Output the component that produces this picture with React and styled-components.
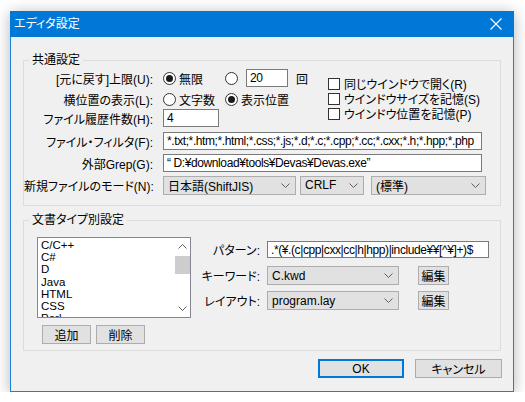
import styled, { createGlobalStyle } from "styled-components";

const GlobalStyle = createGlobalStyle`
    body {
        margin: 0;
        background: #ffffff;
        font-family: "Liberation Sans", "Noto Sans CJK JP", sans-serif;
        font-size: 12px;
        font-feature-settings: "palt";
        color: #000000;
    }
`;

const Window = styled.div`
    box-sizing: border-box;
    width: 504px;
    height: 381px;
    margin: 11px 0 0 10px;
    border: 1px solid #1a7fd6;
    border-top: none;
    background: #f0f0f0;
    box-shadow: 0 2px 14px rgba(0, 0, 0, 0.3);
    display: flex;
    flex-direction: column;
`;

const TitleBar = styled.div`
    height: 26px;
    margin: 0 -1px;
    padding: 0 12px 0 4px;
    background: #0078d7;
    color: #ffffff;
    display: flex;
    align-items: center;
    justify-content: space-between;
    flex: none;
`;

const TitleText = styled.span`
    font-size: 12px;
    line-height: 14px;
`;

const Body = styled.div`
    padding: 0 12px;
    display: flex;
    flex-direction: column;
`;

const Group = styled.fieldset`
    box-sizing: border-box;
    margin: ${(p) => p.$top}px 0 0;
    padding: 0;
    min-width: 0;
    height: ${(p) => p.$height}px;
    border: 1px solid #dcdcdc;
`;

const Legend = styled.legend`
    margin-left: 5px;
    padding: 0 3px;
    font-size: 12px;
    line-height: 14px;
`;

const Top = styled.div`
    display: flex;
`;

const Column = styled.div`
    display: flex;
    flex-direction: column;
    flex: none;
    width: ${(p) => (p.$width ? `${p.$width}px` : "auto")};
    margin-top: ${(p) => p.$top || 0}px;
    margin-left: ${(p) => p.$left || 0}px;
`;

const Row = styled.div`
    display: flex;
    align-items: center;
    height: ${(p) => p.$height || 18}px;
    margin-top: ${(p) => p.$top || 0}px;
    gap: ${(p) => p.$gap ?? 10}px;
`;

const Label = styled.span`
    flex: none;
    width: ${(p) => p.$width || 129}px;
    text-align: right;
    white-space: nowrap;
`;

const Controls = styled.div`
    display: flex;
    align-items: center;
    height: 100%;
`;

const RadioItem = styled.label`
    display: flex;
    align-items: center;
    gap: 3px;
    width: ${(p) => (p.$width ? `${p.$width}px` : "auto")};
    flex: none;
    white-space: nowrap;
`;

const RadioCircle = styled.span`
    box-sizing: border-box;
    width: 13px;
    height: 13px;
    border-radius: 50%;
    border: 1px solid #333333;
    background: #ffffff;
    display: flex;
    align-items: center;
    justify-content: center;

    &::after {
        content: "";
        width: 7px;
        height: 7px;
        border-radius: 50%;
        background: ${(p) => (p.$checked ? "#1a1a1a" : "transparent")};
    }
`;

const TextBox = styled.div`
    box-sizing: border-box;
    width: ${(p) => p.$width}px;
    height: ${(p) => p.$height || 18}px;
    flex: none;
    border: 1px solid #7a7a7a;
    background: #ffffff;
    padding-left: 3px;
    display: flex;
    align-items: center;
    overflow: hidden;
    white-space: nowrap;
    letter-spacing: -0.4px;
`;

const Unit = styled.span`
    margin-left: 8px;
`;

const CheckRow = styled.label`
    display: flex;
    align-items: center;
    gap: 4px;
    height: 15px;
    white-space: nowrap;
`;

const CheckBox = styled.span`
    box-sizing: border-box;
    width: 12px;
    height: 12px;
    border: 1px solid #333333;
    background: #ffffff;
    flex: none;
`;

const SelectBox = styled.div`
    box-sizing: border-box;
    width: ${(p) => p.$width}px;
    height: ${(p) => p.$height || 19}px;
    margin-left: ${(p) => p.$left || 0}px;
    flex: none;
    border: 1px solid #adadad;
    background: #e1e1e1;
    padding: 0 5px 0 4px;
    display: flex;
    align-items: center;
    justify-content: space-between;
    white-space: nowrap;
    overflow: hidden;
`;

const Button = styled.div`
    box-sizing: border-box;
    width: ${(p) => p.$width}px;
    height: 19px;
    margin-left: ${(p) => p.$left || 0}px;
    flex: none;
    border: ${(p) => (p.$default ? "2px solid #0078d7" : "1px solid #adadad")};
    background: #e1e1e1;
    display: flex;
    align-items: center;
    justify-content: center;
`;

const ListBox = styled.div`
    box-sizing: border-box;
    width: 154px;
    height: 81px;
    border: 1px solid #828790;
    background: #ffffff;
    display: flex;
`;

const ListItems = styled.div`
    flex: 1;
    padding: 1px 0 0 3px;
    overflow: hidden;
    font-size: 11.5px;
    line-height: 12.2px;
`;

const ScrollBar = styled.div`
    width: 15px;
    flex: none;
    display: flex;
    flex-direction: column;
    align-items: center;
`;

const ScrollArrow = styled.div`
    height: 17px;
    width: 100%;
    display: flex;
    align-items: center;
    justify-content: center;
`;

const ScrollThumb = styled.div`
    margin-top: 1px;
    width: 15px;
    height: 18px;
    background: #cdcdcd;
`;

const ScrollTrack = styled.div`
    flex: 1;
`;

const ButtonRow = styled.div`
    display: flex;
    margin-top: ${(p) => p.$top || 0}px;
    margin-left: ${(p) => p.$left || 0}px;
`;

const Footer = styled.div`
    display: flex;
    justify-content: flex-end;
    margin: 8px -1px 0 0;
`;

function Chevron({ up }) {
    return (
        <svg width="9" height="5" viewBox="0 0 9 5">
            <path
                d={up ? "M0.5 4.5 L4.5 0.5 L8.5 4.5" : "M0.5 0.5 L4.5 4.5 L8.5 0.5"}
                fill="none"
                stroke="#606060"
                strokeWidth="1"
            />
        </svg>
    );
}

function Radio({ checked, width, children }) {
    return (
        <RadioItem $width={width}>
            <RadioCircle $checked={checked} />
            {children}
        </RadioItem>
    );
}

function Check({ children }) {
    return (
        <CheckRow>
            <CheckBox />
            {children}
        </CheckRow>
    );
}

function Select({ width, left, children }) {
    return (
        <SelectBox $width={width} $left={left}>
            <span>{children}</span>
            <Chevron />
        </SelectBox>
    );
}

const fileTypes = ["C/C++", "C#", "D", "Java", "HTML", "CSS", "Perl"];

export default function App() {
    return (
        <>
            <GlobalStyle />
            <Window>
                <TitleBar>
                    <TitleText>エディタ設定</TitleText>
                    <svg width="12" height="12" viewBox="0 0 12 12">
                        <path d="M0.5 0.5 L11.5 11.5 M11.5 0.5 L0.5 11.5" stroke="#ffffff" strokeWidth="1.1" />
                    </svg>
                </TitleBar>

                <Body>
                    <Group $top={16} $height={153}>
                        <Legend>共通設定</Legend>
                        <Top>
                            <Column $width={304}>
                                <Row $top={2}>
                                    <Label>[元に戻す]上限(U):</Label>
                                    <Controls>
                                        <Radio checked width={62}>無限</Radio>
                                        <Radio width={21} />
                                        <TextBox $width={42}>20</TextBox>
                                        <Unit>回</Unit>
                                    </Controls>
                                </Row>
                                <Row $top={3}>
                                    <Label>横位置の表示(L):</Label>
                                    <Controls>
                                        <Radio width={62}>文字数</Radio>
                                        <Radio checked>表示位置</Radio>
                                    </Controls>
                                </Row>
                                <Row $top={1}>
                                    <Label>ファイル履歴件数(H):</Label>
                                    <TextBox $width={56}>4</TextBox>
                                </Row>
                            </Column>
                            <Column $top={9}>
                                <Check>同じウインドウで開く(R)</Check>
                                <Check>ウインドウサイズを記憶(S)</Check>
                                <Check>ウインドウ位置を記憶(P)</Check>
                            </Column>
                        </Top>
                        <Row $top={5}>
                            <Label>ファイル・フィルタ(F):</Label>
                            <TextBox $width={319}>
                                *.txt;*.htm;*.html;*.css;*.js;*.d;*.c;*.cpp;*.cc;*.cxx;*.h;*.hpp;*.php
                            </TextBox>
                        </Row>
                        <Row $top={4}>
                            <Label>外部Grep(G):</Label>
                            <TextBox $width={319}>“ D:¥download¥tools¥Devas¥Devas.exe”</TextBox>
                        </Row>
                        <Row $top={3} $height={20}>
                            <Label>新規ファイルのモード(N):</Label>
                            <Controls>
                                <Select width={133}>日本語(ShiftJIS)</Select>
                                <Select width={64} left={4}>CRLF</Select>
                                <Select width={115} left={7}>(標準)</Select>
                            </Controls>
                        </Row>
                    </Group>

                    <Group $top={7} $height={138}>
                        <Legend>文書タイプ別設定</Legend>
                        <Top>
                            <Column $left={13} $top={10}>
                                <ListBox>
                                    <ListItems>
                                        {fileTypes.map((t) => (
                                            <div key={t}>{t}</div>
                                        ))}
                                    </ListItems>
                                    <ScrollBar>
                                        <ScrollArrow>
                                            <Chevron up />
                                        </ScrollArrow>
                                        <ScrollThumb />
                                        <ScrollTrack />
                                        <ScrollArrow>
                                            <Chevron />
                                        </ScrollArrow>
                                    </ScrollBar>
                                </ListBox>
                                <ButtonRow $top={7} $left={5}>
                                    <Button $width={49}>追加</Button>
                                    <Button $width={49} $left={5}>削除</Button>
                                </ButtonRow>
                            </Column>
                            <Column $left={9} $top={14}>
                                <Row $height={17} $gap={7}>
                                    <Label $width={60}>パターン:</Label>
                                    <TextBox $width={222} $height={17}>
                                        .*(¥.(c|cpp|cxx|cc|h|hpp)|include¥¥[^¥]+)$
                                    </TextBox>
                                </Row>
                                <Row $height={19} $top={8} $gap={7}>
                                    <Label $width={60}>キーワード:</Label>
                                    <Controls>
                                        <Select width={132}>C.kwd</Select>
                                        <Button $width={31} $left={19}>編集</Button>
                                    </Controls>
                                </Row>
                                <Row $height={19} $top={6} $gap={7}>
                                    <Label $width={60}>レイアウト:</Label>
                                    <Controls>
                                        <Select width={132}>program.lay</Select>
                                        <Button $width={31} $left={19}>編集</Button>
                                    </Controls>
                                </Row>
                            </Column>
                        </Top>
                    </Group>

                    <Footer>
                        <Button $width={86} $default>OK</Button>
                        <Button $width={87} $left={11}>キャンセル</Button>
                    </Footer>
                </Body>
            </Window>
        </>
    );
}
